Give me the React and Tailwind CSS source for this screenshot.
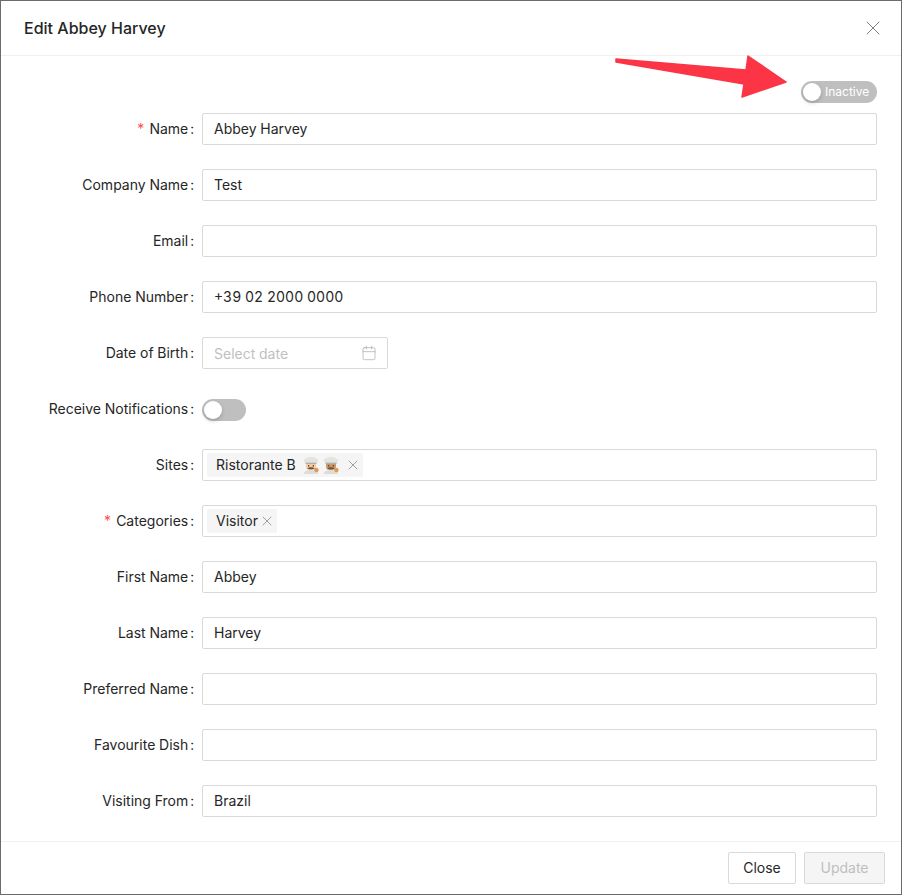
import { X, Calendar } from 'lucide-react'

const fields = [
  { label: 'Name', value: 'Abbey Harvey', required: true },
  { label: 'Company Name', value: 'Test' },
  { label: 'Email', value: '' },
  { label: 'Phone Number', value: '+39 02 2000 0000' },
  { label: 'Date of Birth', type: 'date' },
  { label: 'Receive Notifications', type: 'switch' },
  { label: 'Sites', type: 'tags', tags: ['Ristorante B'] },
  { label: 'Categories', type: 'tags', tags: ['Visitor'], required: true },
  { label: 'First Name', value: 'Abbey' },
  { label: 'Last Name', value: 'Harvey' },
  { label: 'Preferred Name', value: '' },
  { label: 'Favourite Dish', value: '' },
  { label: 'Visiting From', value: 'Brazil' },
]

const Chef = ({ skin }) => (
  <svg width="16" height="17" viewBox="0 0 16 17" className="shrink-0">
    <path d="M2.5 5.6C-.2 5 .2 1.2 3 1.4 4.5-.4 11.5-.4 13 1.4 15.8 1.2 16.2 5 13.5 5.6V7H2.5Z" fill="#e6e4df" />
    <rect x="2.5" y="5.6" width="11" height="1.4" fill="#b4b1aa" />
    <path d="M3 7H13V9.6C13 12.4 10.6 13.4 8 13.4S3 12.4 3 9.6Z" fill={skin} />
    <rect x="5" y="8.2" width="1.3" height="1.3" fill="#4a3a2c" />
    <rect x="9.7" y="8.2" width="1.3" height="1.3" fill="#4a3a2c" />
    <path d="M4.2 11.4C6 9.8 10 9.8 11.8 11.4 10 12.4 6 12.4 4.2 11.4Z" fill="#6f5138" />
    <path d="M1 17C1 14.4 3.5 13 8 13S15 14.4 15 17Z" fill="#dedcd7" />
    <circle cx="13.4" cy="13" r="2.2" fill="#e09a58" />
  </svg>
)

const Input = ({ value }) => (
  <div className="flex h-8 flex-1 items-center rounded-[2px] border border-[#d9d9d9] bg-white px-[11px] text-[#262626]">
    {value}
  </div>
)

const Tag = ({ text }) => {
  const isSite = text === 'Ristorante B'
  return (
    <div className="flex h-6 items-center rounded-[2px] bg-[#f5f5f5] pl-[9px] pr-[2px] text-[#262626]">
      <span>{text}</span>
      {isSite && (
        <span className="ml-[7px] flex gap-1">
          <Chef skin="#f2cda6" />
          <Chef skin="#c99a70" />
        </span>
      )}
      <X size={16} strokeWidth={1} className={`text-[#737373] ${isSite ? 'ml-[6px]' : 'ml-px'}`} />
    </div>
  )
}

const Control = ({ field }) => {
  if (field.type === 'date') {
    return (
      <div className="flex h-8 w-[186px] items-center justify-between rounded-[2px] border border-[#d9d9d9] bg-white pl-[11px] pr-[10px] text-[#bfbfbf]">
        <span className="pt-px">Select date</span>
        <Calendar size={16} strokeWidth={1} className="text-[#a6a6a6]" />
      </div>
    )
  }
  if (field.type === 'switch') {
    return (
      <div className="mt-[2px] flex h-[22px] w-11 items-center rounded-full bg-[#bfbfbf] pl-[2px]">
        <span className="h-[18px] w-[18px] rounded-full bg-white shadow-[0_2px_4px_rgba(0,35,11,0.2)]" />
      </div>
    )
  }
  if (field.type === 'tags') {
    return (
      <div className="flex h-8 flex-1 items-center gap-1 rounded-[2px] border border-[#d9d9d9] bg-white px-1">
        {field.tags.map((t) => <Tag key={t} text={t} />)}
      </div>
    )
  }
  return <Input value={field.value} />
}

const App = () => {
  return (
    <div className="relative h-[895px] w-[902px] overflow-hidden bg-[#6b6b6b] pl-px pt-px font-['Inter','Liberation_Sans',sans-serif] text-sm tabular-nums">
      <div className="flex h-[893px] w-[900px] flex-col bg-white">
        <div className="flex h-[55px] shrink-0 items-center justify-between border-b border-[#f0f0f0] pl-[23px] pr-[16px]">
          <h1 className="text-base font-medium text-[#262626]">Edit Abbey Harvey</h1>
          <X size={24} strokeWidth={1} className="text-[#7f7f7f]" />
        </div>

        <div className="flex-1 overflow-hidden pl-[24px] pr-[24px] pt-[25px]">
          <div className="mb-[10px] flex justify-end">
            <div className="flex h-[22px] w-[76px] items-center rounded-full bg-[#bfbfbf] pl-[2px]">
              <span className="h-[18px] w-[18px] rounded-full bg-white shadow-[0_2px_4px_rgba(0,35,11,0.2)]" />
              <span className="ml-1 text-xs text-white">Inactive</span>
            </div>
          </div>

          <div className="flex flex-col gap-6">
            {fields.map((f) => (
              <div key={f.label} className="flex h-8 items-center">
                <label className="flex w-[177px] shrink-0 items-center justify-end whitespace-nowrap pr-[8px] text-[#262626]">
                  {f.required && <span className="mr-1 text-[#ff4d4f]">*</span>}
                  {f.label}
                  <span className="ml-[2px]">:</span>
                </label>
                <Control field={f} />
              </div>
            ))}
          </div>
        </div>

        <div className="flex h-[53px] shrink-0 items-start justify-end gap-2 border-t border-[#f0f0f0] pr-4 pt-[10px]">
          <button className="h-8 w-[68px] rounded-[2px] border border-[#d9d9d9] bg-white text-[#262626]">Close</button>
          <button className="h-8 w-[81px] rounded-[2px] border border-[#d9d9d9] bg-[#f5f5f5] text-[#bfbfbf]">Update</button>
        </div>
      </div>

      {/* red annotation arrow */}
      <svg className="absolute left-[610px] top-[50px]" width="185" height="55" viewBox="610 50 185 55">
        <path
          d="M616 59L746 70L748 56L786 82L742 97L744 84L616 62Z"
          fill="#fb3545"
          stroke="#fb3545"
          strokeWidth="1.5"
          strokeLinejoin="round"
        />
      </svg>
    </div>
  )
}

export default App
